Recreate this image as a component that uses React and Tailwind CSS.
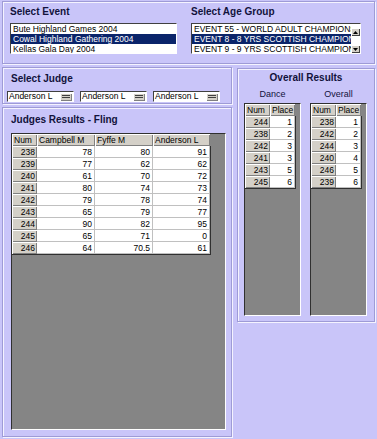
import React from 'react'

const events = ['Bute Highland Games 2004', 'Cowal Highland Gathering 2004', 'Kellas Gala Day 2004']
const ages = ['EVENT 55 - WORLD ADULT CHAMPIONSHIP', 'EVENT 8 - 8 YRS SCOTTISH CHAMPIONSHIP', 'EVENT 9 - 9 YRS SCOTTISH CHAMPIONSHIP']

const judgeRows = [
  [238, 78, 80, 91],
  [239, 77, 62, 62],
  [240, 61, 70, 72],
  [241, 80, 74, 73],
  [242, 79, 78, 74],
  [243, 65, 79, 77],
  [244, 90, 82, 95],
  [245, 65, 71, 0],
  [246, 64, 70.5, 61],
]

const dance = [[244, 1], [238, 2], [242, 3], [241, 3], [243, 5], [245, 6]]
const overall = [[238, 1], [242, 2], [244, 3], [240, 4], [246, 5], [239, 6]]

function Panel({ className = '', children }) {
  return (
    <div className={`border border-[#9e9bd6] shadow-[inset_1px_1px_0_#f4f3ff,1px_1px_0_#f4f3ff] ${className}`}>
      {children}
    </div>
  )
}

function Label({ children, className = '' }) {
  return <div className={`text-[10px] leading-[12px] font-bold text-[#12123c] ${className}`}>{children}</div>
}

function ListBox({ items, selected, width, scroll }) {
  return (
    <div className={`${width} h-[31px] bg-white border border-t-[#404040] border-l-[#404040] border-r-white border-b-white flex`}>
      <div className="flex-1 min-w-0 overflow-hidden">
        {items.map((t, i) => (
          <div
            key={t}
            className={`h-[10px] text-[8.5px] leading-[10px] pl-[2px] whitespace-nowrap overflow-hidden ${i === selected ? 'bg-[#0a246a] text-white' : 'text-black'}`}
          >
            {t}
          </div>
        ))}
      </div>
      {scroll && (
        <div className="w-[9px] flex flex-col justify-between pt-[4px] bg-white">
          <div className="h-[8px] bg-[#d4d0c8] shadow-[inset_1px_1px_0_#fff,inset_-1px_-1px_0_#404040] flex items-center justify-center">
            <svg width="5" height="3" viewBox="0 0 5 3"><path d="M2.5 0L5 3H0z" fill="#000" /></svg>
          </div>
          <div className="h-[8px] bg-[#d4d0c8] shadow-[inset_1px_1px_0_#fff,inset_-1px_-1px_0_#404040] flex items-center justify-center">
            <svg width="5" height="3" viewBox="0 0 5 3"><path d="M0 0H5L2.5 3z" fill="#000" /></svg>
          </div>
        </div>
      )}
    </div>
  )
}

function Combo() {
  return (
    <div className="w-[67px] h-[11px] bg-white border border-t-[#404040] border-l-[#404040] border-r-white border-b-white flex items-center">
      <div className="flex-1 text-[8.5px] leading-[9px] pl-[1px] text-black whitespace-nowrap overflow-hidden">Anderson L</div>
      <div className="w-[12px] h-[8px] mr-[1px] bg-[#d4d0c8] shadow-[inset_1px_1px_0_#fff,inset_-1px_-1px_0_#808080] flex flex-col justify-center gap-[1px] px-[2px]">
        <div className="h-px bg-[#404040]" />
        <div className="h-px bg-[#404040]" />
      </div>
    </div>
  )
}

const fixedCell = 'bg-[#d4d0c8] shadow-[inset_1px_1px_0_#fff,inset_-1px_-1px_0_#808080]'
const dataCell = 'bg-white border-r border-b border-[#c0c0c0]'

function Grid({ widths, header, rows, className }) {
  return (
    <div className={`bg-[#858585] border border-t-[#303030] border-l-[#303030] border-r-white border-b-white overflow-hidden ${className}`}>
      <div className="inline-block">
        <div className="flex h-[12px]">
          {header.map((h, i) => (
            <div key={h} className={`${widths[i]} h-[12px] ${fixedCell} text-[8.5px] leading-[12px] pl-[2px] text-black whitespace-nowrap overflow-hidden`}>
              {h}
            </div>
          ))}
        </div>
        <div className="border-r border-b border-[#303030]">
          {rows.map((r) => (
            <div key={r[0]} className="flex h-[12px]">
              {r.map((v, i) => (
                <div
                  key={i}
                  className={`${widths[i]} h-[12px] ${i === 0 ? fixedCell : dataCell} text-[8.5px] leading-[12px] pr-[2px] text-right text-black`}
                >
                  {v}
                </div>
              ))}
            </div>
          ))}
        </div>
      </div>
    </div>
  )
}

export default function App() {
  return (
    <div className="w-[377px] h-[439px] bg-[#c9c5f9] px-[2px] pt-[1px] overflow-hidden font-['Liberation_Sans',Arial,sans-serif]">
      {/* events + age groups */}
      <Panel className="h-[63px] flex pl-[7px] gap-[14px]">
        <div className="flex flex-col pt-[4px]">
          <Label>Select Event</Label>
          <div className="mt-[5px]">
            <ListBox items={events} selected={1} width="w-[167px]" />
          </div>
        </div>
        <div className="flex flex-col pt-[4px]">
          <Label>Select Age Group</Label>
          <div className="mt-[5px]">
            <ListBox items={ages} selected={1} width="w-[170px]" scroll />
          </div>
        </div>
      </Panel>

      <div className="mt-[3px] flex gap-[5px]">
        <div className="w-[230px] flex flex-col gap-[3px]">
          {/* judges */}
          <Panel className="h-[37px] pl-[4px] pt-[5px]">
            <Label className="pl-[4px]">Select Judge</Label>
            <div className="mt-[6px] flex gap-[6px]">
              <Combo />
              <Combo />
              <Combo />
            </div>
          </Panel>

          {/* results */}
          <Panel className="h-[330px] pl-[8px] pt-[6px]">
            <Label>Judges Results - Fling</Label>
            <Grid
              className="mt-[7px] w-[215px] h-[297px]"
              widths={['w-[25px]', 'w-[58px]', 'w-[58px]', 'w-[57px]']}
              header={['Num', 'Campbell M', 'Fyffe M', 'Anderson L']}
              rows={judgeRows}
            />
          </Panel>
        </div>

        <Panel className="w-[138px] h-[254px] mt-[1px] pt-[3px] pl-[6px]">
          <Label className="text-center pr-[6px]">Overall Results</Label>
          <div className="mt-[5px] flex gap-[9px]">
            <div className="w-[57px] flex flex-col">
              <div className="text-[9px] leading-[10px] text-center text-[#12123c]">Dance</div>
              <Grid
                className="mt-[4px] w-[57px] h-[213px]"
                widths={['w-[25px]', 'w-[25px]']}
                header={['Num', 'Place']}
                rows={dance}
              />
            </div>
            <div className="w-[57px] flex flex-col">
              <div className="text-[9px] leading-[10px] text-center text-[#12123c]">Overall</div>
              <Grid
                className="mt-[4px] w-[57px] h-[213px]"
                widths={['w-[25px]', 'w-[25px]']}
                header={['Num', 'Place']}
                rows={overall}
              />
            </div>
          </div>
        </Panel>
      </div>
    </div>
  )
}
